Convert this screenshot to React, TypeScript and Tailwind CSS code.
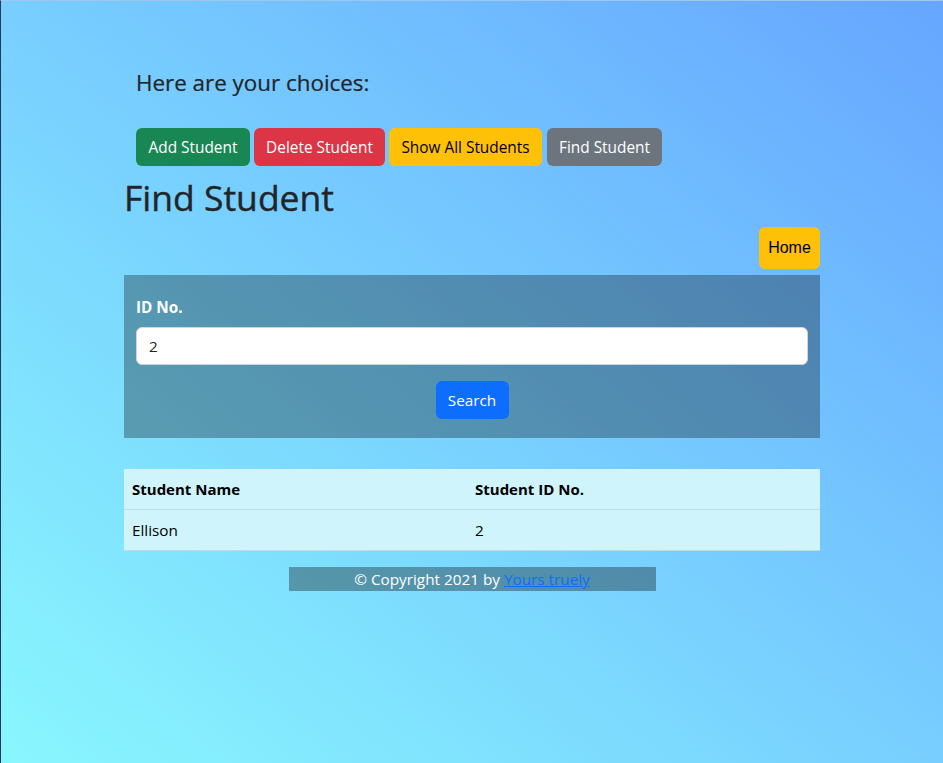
export default function App() {
  return (
    <div className="min-h-screen w-full border-l border-t border-l-[#26395a] border-t-[#9fc6ee] bg-[linear-gradient(to_top_right,#89f7fe,#66a6ff)] font-['Open_Sans',sans-serif] text-[#212529]">
      <div className="mx-auto w-full max-w-[720px] px-3 pt-[68px]">
        <h4 className="pl-3 text-[22.4px] font-medium leading-[28px] [-webkit-text-stroke:0.2px_#212529]">Here are your choices:</h4>
        <div className="mt-[31px] flex gap-1 pl-3">
          <button className="h-[38px] w-[114px] rounded-md bg-[#198754] pt-px text-[15.4px] text-white">Add Student</button>
          <button className="h-[38px] w-[131px] rounded-md bg-[#dc3545] pt-px text-[15.4px] text-white">Delete Student</button>
          <button className="h-[38px] w-[153px] rounded-md bg-[#ffc107] pt-px text-[15.4px] text-black">Show All Students</button>
          <button className="ml-px h-[38px] w-[115px] rounded-md bg-[#6c757d] pt-px text-[15.4px] text-white">Find Student</button>
        </div>
        <h1 className="mt-[10px] text-[35.5px] font-medium leading-[43px] [-webkit-text-stroke:0.4px_#212529]">Find Student</h1>
        <div className="mt-[8px] flex justify-end">
          <button className="h-[42px] w-[61px] rounded-md bg-[#ffc107] font-['Liberation_Sans',Arial,sans-serif] text-base text-black">Home</button>
        </div>
        <div className="mt-[6px] bg-black/30 px-3 pb-[19px] pt-5">
          <label className="mb-2 block text-[15.3px] font-bold leading-6 text-white">ID No.</label>
          <input
            readOnly
            value="2"
            className="block h-[38px] w-full rounded-md border border-[#ced4da] bg-white px-3 text-[15.3px] leading-6 text-[#212529] outline-none"
          />
          <button className="mx-auto mt-4 block h-[38px] w-[73px] rounded-md bg-[#0d6efd] text-[15.3px] text-white">Search</button>
        </div>
        <div className="mt-[31px] bg-[#cff4fc] text-[15.3px] leading-6 text-black">
          <div className="grid grid-cols-[343px_1fr] border-b border-[#badce3]">
            <div className="px-2 py-2 text-[15px] font-bold">Student Name</div>
            <div className="px-2 py-2 text-[15px] font-bold">Student ID No.</div>
          </div>
          <div className="grid grid-cols-[343px_1fr] border-b border-[#badce3]">
            <div className="px-2 py-2">Ellison</div>
            <div className="px-2 py-2">2</div>
          </div>
        </div>
        <div className="mx-auto mt-4 h-6 w-[367px] bg-black/[0.33] text-center text-[15.3px] leading-6 text-white">
          © Copyright 2021 by <a className="text-[#0d6efd] underline">Yours truely</a>
        </div>
      </div>
    </div>
  );
}
